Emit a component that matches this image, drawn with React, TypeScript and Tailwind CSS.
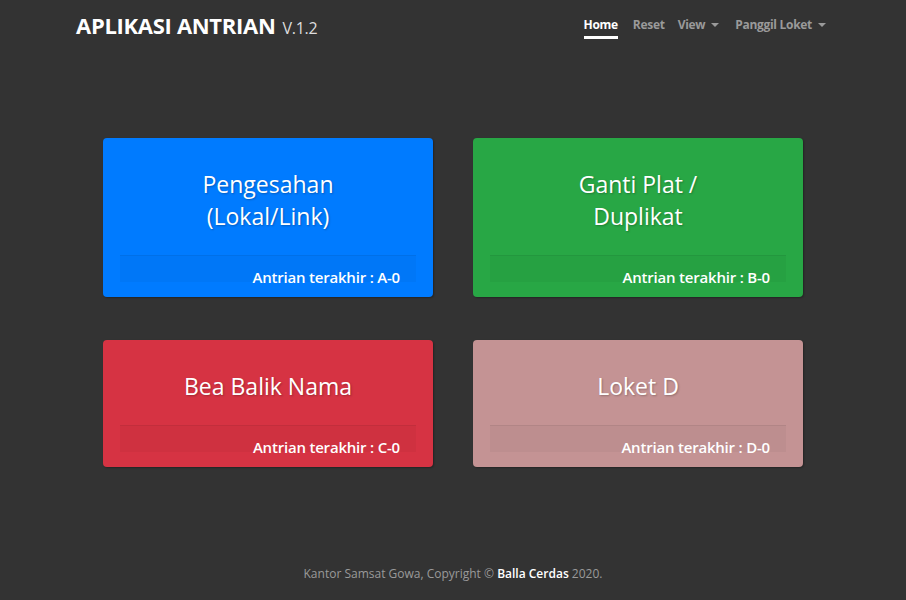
const LOKET = [
  { title: ['Pengesahan', '(Lokal/Link)'], kode: 'A', bg: 'bg-[#007bff]' },
  { title: ['Ganti Plat /', 'Duplikat'], kode: 'B', bg: 'bg-[#28a745]' },
  { title: ['Bea Balik Nama'], kode: 'C', bg: 'bg-[#d63343]' },
  { title: ['Loket D'], kode: 'D', bg: 'bg-[#c49394]' },
];

function Caret() {
  return <span className="ml-[6px] inline-block border-x-[4px] border-t-[4px] border-x-transparent border-t-[#9a9a9a] align-middle" />;
}

export default function App() {
  return (
    <div className="min-h-[600px] bg-[#333333] text-white flex flex-col" style={{ fontFamily: '"Open Sans", "Liberation Sans", sans-serif' }}>
      <header className="h-[50px] flex items-center justify-between pl-[76px] pr-[80px]">
        <div className="flex items-baseline">
          <span className="text-[22px] font-bold tracking-[-0.3px]">APLIKASI ANTRIAN</span>
          <span className="ml-[7px] text-[16px] tracking-[-0.3px] text-[#dddddd]">V.1.2</span>
        </div>
        <nav className="flex items-center text-[12px] font-bold text-[#9a9a9a] tracking-[-0.3px]">
          <span className="relative text-white">
            Home
            <span className="absolute left-0 right-0 top-[20px] h-[3px] bg-white" />
          </span>
          <span className="ml-[15px]">Reset</span>
          <span className="ml-[13px] flex items-center">View<Caret /></span>
          <span className="ml-[16px] flex items-center">Panggil Loket<Caret /></span>
        </nav>
      </header>

      <main className="mx-auto mt-[88px] grid grid-cols-[330px_330px] gap-x-[40px] gap-y-[43px]">
        {LOKET.map((l) => (
          <div key={l.kode} className={`${l.bg} rounded-[4px] px-[17px] pt-[17px] pb-[15px] shadow-[1px_1px_2px_rgba(0,0,0,0.3)]`}>
            <div className="pt-[13px] pb-[23px] text-center text-[23px] leading-[32px] [text-shadow:1px_1px_2px_rgba(0,0,0,0.25)]">
              {l.title.map((t) => (
                <div key={t}>{t}</div>
              ))}
            </div>
            <div className="h-[27px] bg-black/[0.03] border-t border-black/[0.06] pr-[16px] pt-[11px] text-right text-[15px] font-semibold leading-[20px] tracking-[-0.2px]">
              Antrian terakhir : {l.kode}-0
            </div>
          </div>
        ))}
      </main>

      <footer className="mt-auto pb-[17px] text-center text-[12px] text-[#9a9a9a]">
        Kantor Samsat Gowa, Copyright © <span className="font-semibold text-white">Balla Cerdas</span> 2020.
      </footer>
    </div>
  );
}
